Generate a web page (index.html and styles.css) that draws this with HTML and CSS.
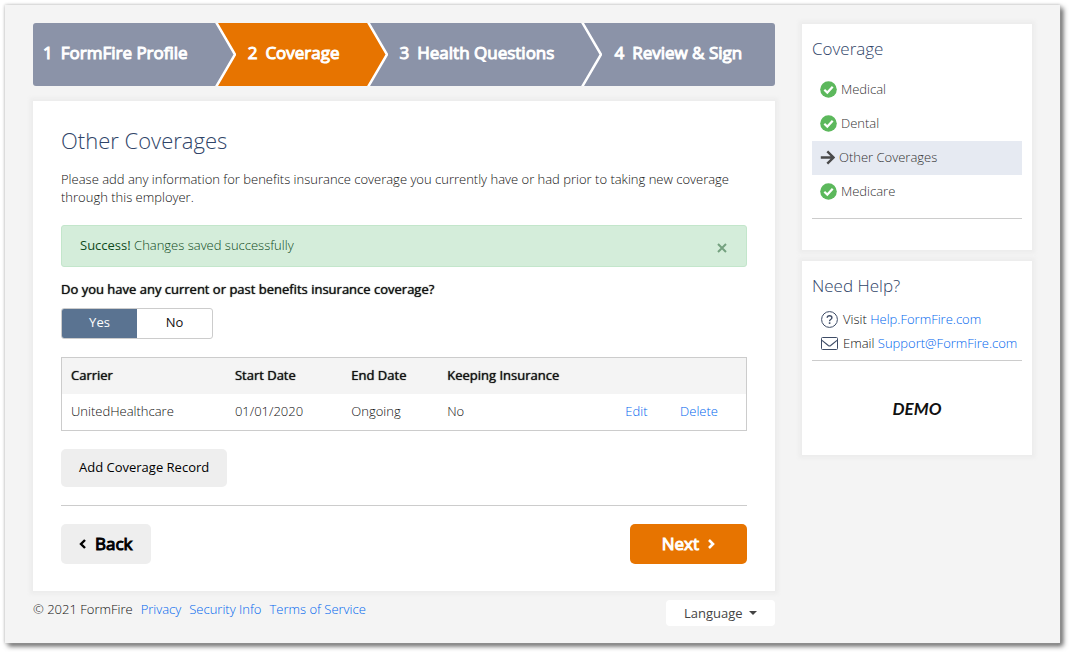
FILE: index.html
```html
<!DOCTYPE html>
<html lang="en">
<head>
  <meta charset="UTF-8" />
  <meta name="viewport" content="width=device-width, initial-scale=1" />
  <title>FormFire - Other Coverages</title>
  <link rel="stylesheet" href="styles.css">
</head>
<body>

<div class="page">
  <div class="content">
    <ol class="steps">
      <li class="step"><span>1</span><span>FormFire Profile</span></li>
      <li class="arrow" aria-hidden="true">
        <svg width="21" height="63" viewBox="0 0 21 63">
          <rect width="21" height="63" fill="#e77400" />
          <path d="M0 0H1L20 31.500L1 63H0Z" fill="#8b93a8" />
          <path d="M1 -1L20 31.500L1 64" fill="none" stroke="#fff" stroke-width="2.500" />
        </svg>
      </li>
      <li class="step active"><span>2</span><span>Coverage</span></li>
      <li class="arrow" aria-hidden="true">
        <svg width="21" height="63" viewBox="0 0 21 63">
          <rect width="21" height="63" fill="#8b93a8" />
          <path d="M0 0H1L20 31.500L1 63H0Z" fill="#e77400" />
          <path d="M1 -1L20 31.500L1 64" fill="none" stroke="#fff" stroke-width="2.500" />
        </svg>
      </li>
      <li class="step"><span>3</span><span>Health Questions</span></li>
      <li class="arrow" aria-hidden="true">
        <svg width="21" height="63" viewBox="0 0 21 63">
          <rect width="21" height="63" fill="#8b93a8" />
          <path d="M1 -1L20 31.500L1 64" fill="none" stroke="#fff" stroke-width="2.500" />
        </svg>
      </li>
      <li class="step last"><span>4</span><span>Review &amp; Sign</span></li>
    </ol>

    <main class="card main-card">
      <h1>Other Coverages</h1>
      <p class="intro">Please add any information for benefits insurance coverage you currently have or had prior to taking new coverage through this employer.</p>

      <div class="alert" role="alert">
        <p><strong>Success!</strong> Changes saved successfully</p>
        <button type="button" class="close" aria-label="Close">
          <svg width="10" height="10" viewBox="0 0 10 10"><path d="M1 1L9 9M9 1L1 9" fill="none" stroke="#74a17f" stroke-width="2" /></svg>
        </button>
      </div>

      <fieldset class="question">
        <legend>Do you have any current or past benefits insurance coverage?</legend>
        <div class="toggle">
          <input type="radio" name="has-coverage" id="coverage-yes" checked>
          <label for="coverage-yes">Yes</label>
          <input type="radio" name="has-coverage" id="coverage-no">
          <label for="coverage-no">No</label>
        </div>
      </fieldset>

      <table class="coverages">
        <thead>
          <tr>
            <th class="col-carrier">Carrier</th>
            <th class="col-start">Start Date</th>
            <th class="col-end">End Date</th>
            <th class="col-keep">Keeping Insurance</th>
            <th class="col-edit"></th>
            <th></th>
          </tr>
        </thead>
        <tbody>
          <tr>
            <td>UnitedHealthcare</td>
            <td>01/01/2020</td>
            <td>Ongoing</td>
            <td>No</td>
            <td><a href="#">Edit</a></td>
            <td><a href="#">Delete</a></td>
          </tr>
        </tbody>
      </table>

      <button type="button" class="btn btn-add">Add Coverage Record</button>

      <div class="actions">
        <button type="button" class="btn btn-nav">
          <svg width="8" height="12" viewBox="0 0 8 12"><path d="M6 2L2 6L6 10" fill="none" stroke="#000" stroke-width="2.400" /></svg>
          Back
        </button>
        <button type="button" class="btn btn-nav btn-next">
          Next
          <svg width="8" height="12" viewBox="0 0 8 12"><path d="M2 2L6 6L2 10" fill="none" stroke="#fff" stroke-width="2.600" /></svg>
        </button>
      </div>
    </main>

    <footer>
      <div class="footer-links">
        <span>© 2021 FormFire</span>
        <a href="#">Privacy</a>
        <a href="#">Security Info</a>
        <a href="#">Terms of Service</a>
      </div>
      <div class="language">
        <select aria-label="Language">
          <option>Language</option>
        </select>
        <svg width="8" height="4" viewBox="0 0 8 4"><path d="M0 0H8L4 4Z" fill="#444" /></svg>
      </div>
    </footer>
  </div>

  <aside class="sidebar">
    <section class="card side-card">
      <h2>Coverage</h2>
      <ul class="side-nav">
        <li>
          <a href="#">
            <svg width="17" height="17" viewBox="0 0 17 17"><circle cx="8.500" cy="8.500" r="8.300" fill="#5cb85c" /><path d="M4.300 8.800L7.300 11.600L12.700 5.800" fill="none" stroke="#fff" stroke-width="2.200" /></svg>
            Medical
          </a>
        </li>
        <li>
          <a href="#">
            <svg width="17" height="17" viewBox="0 0 17 17"><circle cx="8.500" cy="8.500" r="8.300" fill="#5cb85c" /><path d="M4.300 8.800L7.300 11.600L12.700 5.800" fill="none" stroke="#fff" stroke-width="2.200" /></svg>
            Dental
          </a>
        </li>
        <li class="current">
          <a href="#">
            <svg width="15" height="15" viewBox="0 0 15 15"><path d="M0.800 7.500H13M7.300 1.300L13.500 7.500L7.300 13.700" fill="none" stroke="#4a4a4a" stroke-width="2.400" /></svg>
            Other Coverages
          </a>
        </li>
        <li>
          <a href="#">
            <svg width="17" height="17" viewBox="0 0 17 17"><circle cx="8.500" cy="8.500" r="8.300" fill="#5cb85c" /><path d="M4.300 8.800L7.300 11.600L12.700 5.800" fill="none" stroke="#fff" stroke-width="2.200" /></svg>
            Medicare
          </a>
        </li>
      </ul>
    </section>

    <section class="card side-card">
      <h2>Need Help?</h2>
      <ul class="help">
        <li>
          <svg width="17" height="17" viewBox="0 0 17 17"><circle cx="8.500" cy="8.500" r="7.900" fill="none" stroke="#3e4c66" stroke-width="1" /><path d="M6.200 6.800Q6.200 4.700 8.500 4.700Q10.900 4.700 10.900 6.700Q10.900 7.800 9.600 8.500Q8.600 9.100 8.600 10.200" fill="none" stroke="#3e4c66" stroke-width="1.400" /><rect x="7.800" y="11.300" width="1.600" height="1.600" fill="#3e4c66" /></svg>
          <span>Visit <a href="#">Help.FormFire.com</a></span>
        </li>
        <li>
          <svg width="17" height="13" viewBox="0 0 17 13"><rect x="0.500" y="0.500" width="16" height="12" rx="1" fill="none" stroke="#3e4c66" stroke-width="1" /><path d="M1 3.300L7.300 8.500Q8.500 9.400 9.700 8.500L16 3.300" fill="none" stroke="#3e4c66" stroke-width="1.100" /></svg>
          <span>Email <a href="#">Support@FormFire.com</a></span>
        </li>
      </ul>
      <p class="brand">DEMO</p>
    </section>
  </aside>
</div>

</body>
</html>
```
FILE: styles.css
```css
* {
  box-sizing: border-box;
}
body {
  margin: 0;
  padding: 5px 9px 9px 5px;
  background-color: #fff;
  color: #111;
  font-family: "Open Sans", sans-serif;
  font-size: 13px;
  font-weight: 300;
  line-height: 18px;
}
h1, h2, p, ol, ul {
  margin: 0;
  padding: 0;
}
ol, ul {
  list-style: none;
}
a {
  color: #0066ee;
  text-decoration: none;
}
svg {
  display: block;
  flex-shrink: 0;
}
button, select {
  font-family: inherit;
  font-size: 13px;
  cursor: pointer;
}

.page {
  display: flex;
  align-items: flex-start;
  gap: 27px;
  padding: 18px 28px 17px;
  background-color: #f4f4f4;
  box-shadow: 0 0 3px #bbb, 3px 3px 5px #555;
}
.content {
  flex: 1;
  min-width: 0;
}
.sidebar {
  width: 230px;
  padding-top: 1px;
}
.card {
  background-color: #fff;
  box-shadow: 0 0 4px 3px #ececec;
}

/* progress steps */
.steps {
  display: flex;
  height: 63px;
  border-radius: 3px;
  overflow: hidden;
  color: #fff;
  font-size: 17px;
  font-weight: 400;
  -webkit-text-stroke: 1px;
}
.step {
  display: flex;
  align-items: center;
  gap: 8px;
  padding: 0 27px 3px 12px;
  background-color: #8b93a8;
  white-space: nowrap;
}
.step:first-child {
  padding-left: 10px;
}
.step.active {
  background-color: #e77400;
}
.step.last {
  flex: 1;
}

/* main card */
.main-card {
  margin-top: 15px;
  padding: 24px 28px 27px;
}
h1 {
  color: #2f4468;
  font-size: 22px;
  font-weight: 300;
  line-height: 30px;
}
.intro {
  margin-top: 15px;
}
.alert {
  display: flex;
  align-items: center;
  justify-content: space-between;
  margin-top: 19px;
  padding: 10px 18px 12px;
  border: 1px solid #c3e6cb;
  border-radius: 3px;
  background-color: #d4edda;
  color: #0f4a1c;
}
.alert strong {
  font-weight: 400;
}
.close {
  padding: 6px 1px 0;
  border: 0;
  background: none;
}
.question {
  margin: 13px 0 0;
  padding: 0;
  border: 0;
}
.question legend {
  padding: 0;
  font-weight: 400;
  text-shadow: 0 0 1px #111;
}
.toggle {
  display: inline-flex;
  margin-top: 10px;
  border: 1px solid #ccc;
  border-radius: 3px;
  overflow: hidden;
  vertical-align: top;
}
.toggle input {
  position: absolute;
  opacity: 0;
}
.toggle label {
  width: 75px;
  padding: 4px 0 7px;
  font-weight: 400;
  text-align: center;
  cursor: pointer;
}
.toggle input:checked + label {
  background-color: #5a7391;
  color: #fff;
}
.coverages {
  width: 100%;
  margin-top: 18px;
  border: 1px solid #ccc;
  border-collapse: collapse;
  table-layout: fixed;
}
.coverages th, .coverages td {
  padding: 8px 9px 10px;
  text-align: left;
}
.coverages th {
  background-color: #f4f4f4;
  font-weight: 400;
  text-shadow: 0 0 1px #111;
}
.col-carrier {
  width: 24%;
}
.col-start {
  width: 17%;
}
.col-end {
  width: 14%;
}
.col-keep {
  width: 26%;
}
.col-edit {
  width: 8%;
}

.btn {
  border: 0;
  border-radius: 5px;
  background-color: #eee;
  color: #000;
}
.btn-add {
  margin-top: 18px;
  padding: 9px 18px 11px;
  font-weight: 400;
  line-height: 18px;
}
.actions {
  display: flex;
  justify-content: space-between;
  margin-top: 18px;
  padding-top: 18px;
  border-top: 1px solid #ccc;
}
.btn-nav {
  display: flex;
  align-items: center;
  gap: 8px;
  padding: 8px 18px;
  font-size: 17px;
  font-weight: 400;
  line-height: 24px;
  -webkit-text-stroke: 1px;
}
.btn-next {
  padding: 8px 32px;
  background-color: #e77400;
  color: #fff;
}

footer {
  display: flex;
  justify-content: space-between;
  padding-top: 9px;
}
.footer-links {
  display: flex;
  gap: 8px;
}
.language {
  display: flex;
  align-items: center;
  gap: 6px;
  padding: 0 18px;
  border-radius: 4px;
  background-color: #fff;
}
.language select {
  appearance: none;
  height: 26px;
  padding: 0 0 1px;
  border: 0;
  background: none;
  color: #444;
}

/* sidebar */
.side-card {
  padding: 13px 10px 31px;
}
.side-card + .side-card {
  margin-top: 11px;
}
h2 {
  color: #2f4468;
  font-size: 17px;
  font-weight: 300;
  line-height: 24px;
}
.side-nav {
  margin-top: 12px;
  padding-bottom: 9px;
  border-bottom: 1px solid #ccc;
}
.side-nav a {
  display: flex;
  align-items: center;
  gap: 4px;
  padding: 7px 8px 9px;
  color: #333;
}
.side-nav .current {
  background-color: #e6eaf2;
}
.help {
  padding: 9px 0 5px;
  border-bottom: 1px solid #ccc;
}
.help li {
  display: flex;
  align-items: center;
  gap: 5px;
  padding: 3px 0 3px 9px;
}
.brand {
  margin: 36px 0 3px;
  color: #111;
  font-family: Lato, sans-serif;
  font-size: 17px;
  font-style: italic;
  font-weight: 700;
  line-height: 24px;
  text-align: center;
}
```
